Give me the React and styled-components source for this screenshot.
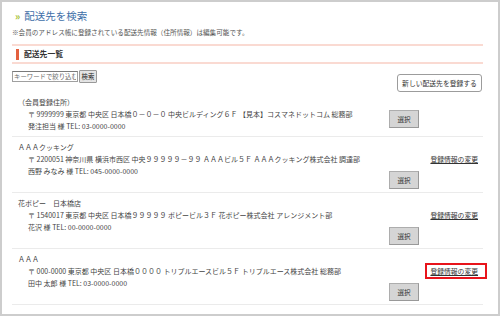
import styled, { createGlobalStyle } from "styled-components";

const GlobalStyle = createGlobalStyle`
  html, body {
    margin: 0;
    padding: 0;
    background: #fff;
  }
  body {
    font-family: "Noto Sans CJK JP", "Noto Sans", sans-serif;
    font-size: 7px;
    line-height: 12px;
    color: #444;
  }
`;

const Frame = styled.div`
  width: 500px;
  height: 316px;
  box-sizing: border-box;
  border: 2px solid #cdcdcd;
  padding: 0 15px 0 10px;
  overflow: hidden;
  background: #fff;
`;

const Title = styled.h1`
  margin: 7px 0 0;
  padding-left: 3px;
  height: 14px;
  display: flex;
  align-items: center;
  gap: 4px;
  font-size: 10.5px;
  line-height: 14px;
  font-weight: 400;
  color: #3d6ea8;

  .arrow {
    font-size: 10px;
    font-weight: 700;
    color: #a5bf2c;
  }
`;

const Note = styled.p`
  margin: 4px 0 0;
  font-size: 6.6px;
  line-height: 10px;
  color: #555;
  white-space: nowrap;
`;

const Divider = styled.div`
  height: 2px;
  background: #fadad2;
  margin-top: ${(p) => p.$top || 0}px;
`;

const SectionHead = styled.h2`
  margin: 0;
  height: 16px;
  display: flex;
  align-items: center;
  gap: 5px;
  padding-left: 4px;
  font-size: 7.8px;
  font-weight: 700;
  color: #333;

  &::before {
    content: "";
    width: 3px;
    height: 11px;
    background: #e3603f;
  }
`;

const Toolbar = styled.div`
  margin-top: 6px;
  display: flex;
  justify-content: space-between;
  align-items: flex-start;
`;

const Search = styled.div`
  height: 13px;
  display: flex;
  align-items: center;
  gap: 1px;
`;

const SearchInput = styled.input`
  width: 66px;
  height: 11px;
  box-sizing: border-box;
  margin: 0;
  padding: 0 1px;
  border: 1px solid #a0a0a0;
  border-top-color: #7a7a7a;
  font-family: inherit;
  font-size: 6.4px;
  color: #333;

  &::placeholder {
    color: #6a6a6a;
  }
`;

const SearchButton = styled.button`
  width: 18px;
  height: 13px;
  margin: 0;
  padding: 0;
  border: 1px solid #999;
  border-radius: 1px;
  background: #e4e4e4;
  font-family: inherit;
  font-size: 6.4px;
  color: #222;
`;

const NewButton = styled.button`
  margin: 4px 1px 0 0;
  width: 85px;
  height: 18px;
  padding: 0;
  border: 1px solid #9c9c9c;
  border-radius: 3px;
  background: #fff;
  font-family: inherit;
  font-size: 6.8px;
  color: #333;
`;

const List = styled.div`
  display: flex;
  flex-direction: column;
`;

const Row = styled.div`
  display: flex;
  padding-top: 4px;
  border-bottom: 1px solid #ebebeb;
`;

const Info = styled.div`
  flex: 1;
  padding: 0 0 4px 6px;
  font-size: 7px;
  line-height: 12px;
  white-space: nowrap;
  color: #444;
`;

const SubLine = styled.div`
  padding-left: 10px;
`;

const Actions = styled.div`
  display: grid;
  grid-template-columns: 36px 58px;
  align-items: start;
`;

const SelectCell = styled.div`
  display: flex;
  padding: ${(p) => p.$top}px 0 3px;
`;

const SelectButton = styled.button`
  width: 30px;
  height: 18px;
  margin: 0;
  padding: 0;
  border: 1px solid #adadad;
  border-right-color: #999;
  border-bottom-color: #999;
  background: #d5d5d5;
  font-family: inherit;
  font-size: 6.6px;
  color: #333;
`;

const LinkCell = styled.div`
  padding: 12px 5px 0 0;
  text-align: right;
  font-size: 6.8px;
  line-height: 12px;
`;

const EditLink = styled.a`
  position: relative;
  color: #333;
  text-decoration: underline;
  white-space: nowrap;

  &::after {
    content: "";
    display: ${(p) => (p.$marked ? "block" : "none")};
    position: absolute;
    left: -5px;
    right: -9px;
    top: -3px;
    bottom: -3px;
    border: 2px solid #e8141b;
  }
`;

const addresses = [
  {
    name: "（会員登録住所）",
    address:
      "〒 9999999 東京都 中央区 日本橋０－０－０ 中央ビルディング６Ｆ 【見本】コスマネドットコム 総務部",
    contact: "発注担当 様 TEL: 03-0000-0000",
    editable: false,
  },
  {
    name: "ＡＡＡクッキング",
    address:
      "〒 2200051 神奈川県 横浜市西区 中央９９９９９－９９ ＡＡＡビル５Ｆ ＡＡＡクッキング株式会社 調達部",
    contact: "西野 みなみ 様 TEL: 045-0000-0000",
    editable: true,
  },
  {
    name: "花ポピー　日本橋店",
    address:
      "〒 1540017 東京都 中央区 日本橋９９９９９ ポピービル３Ｆ 花ポピー株式会社 アレンジメント部",
    contact: "花沢 様 TEL: 00-0000-0000",
    editable: true,
  },
  {
    name: "ＡＡＡ",
    address:
      "〒 000-0000 東京都 中央区 日本橋００００ トリプルエースビル５Ｆ トリプルエース株式会社 総務部",
    contact: "田中 太郎 様 TEL: 03-0000-0000",
    editable: true,
    marked: true,
  },
];

export default function App() {
  return (
    <>
      <GlobalStyle />
      <Frame>
        <Title>
          <span className="arrow">»</span>
          配送先を検索
        </Title>
        <Note>
          ※会員のアドレス帳に登録されている配送先情報（住所情報）は編集可能です。
        </Note>
        <Divider $top={7} />
        <SectionHead>配送先一覧</SectionHead>
        <Divider />

        <Toolbar>
          <Search>
            <SearchInput placeholder="キーワードで絞り込む" />
            <SearchButton>検索</SearchButton>
          </Search>
          <NewButton>新しい配送先を登録する</NewButton>
        </Toolbar>

        <List>
          {addresses.map((a) => (
            <Row key={a.name}>
              <Info>
                <div>{a.name}</div>
                <SubLine>{a.address}</SubLine>
                <SubLine>{a.contact}</SubLine>
              </Info>
              <Actions>
                <SelectCell $top={a.editable ? 30 : 14}>
                  <SelectButton>選択</SelectButton>
                </SelectCell>
                <LinkCell>
                  {a.editable && (
                    <EditLink href="#" $marked={a.marked}>
                      登録情報の変更
                    </EditLink>
                  )}
                </LinkCell>
              </Actions>
            </Row>
          ))}
        </List>
      </Frame>
    </>
  );
}
